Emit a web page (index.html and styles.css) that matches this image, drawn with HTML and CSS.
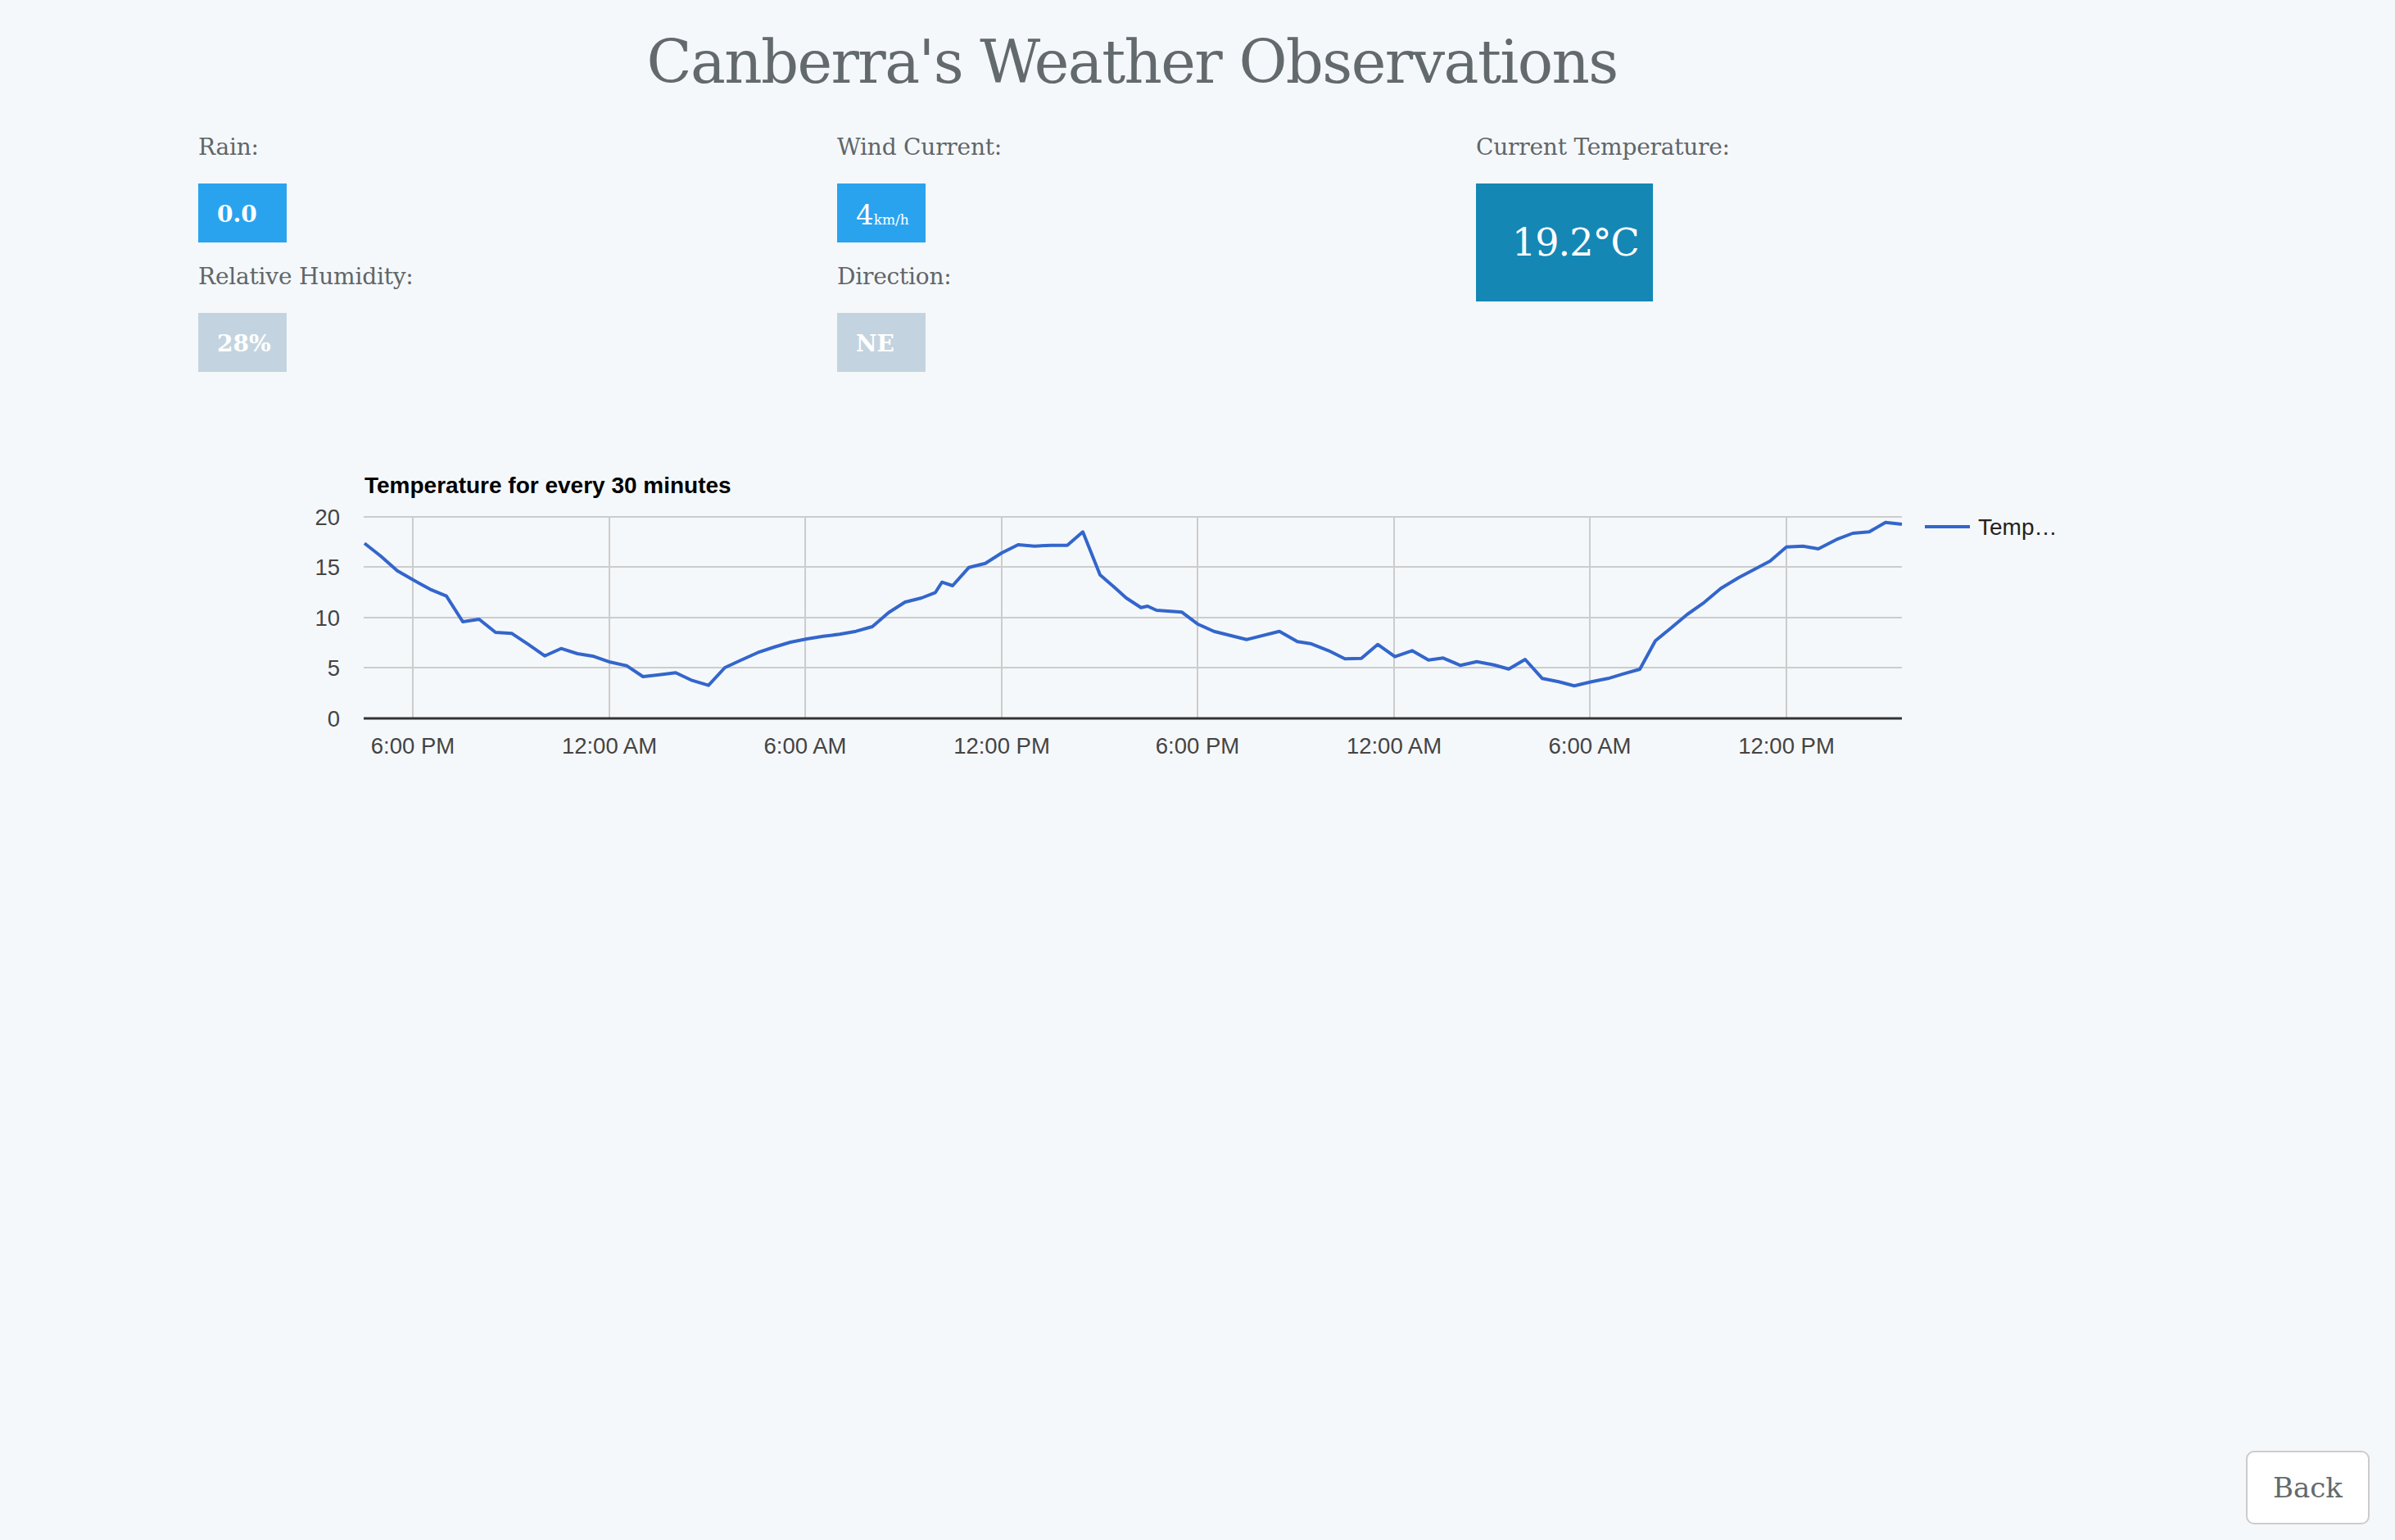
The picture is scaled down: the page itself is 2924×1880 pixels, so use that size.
FILE: index.html
```html
<!DOCTYPE html>
<html lang="en">
<head>
<meta charset="utf-8">
<title>Canberra's Weather Observations</title>
<link rel="stylesheet" href="styles.css">
</head>
<body>
<div class="page">
  <main class="container">
    <h1 class="title">Canberra's Weather Observations</h1>
    <section class="stats">
      <div class="col">
        <div class="stat">
          <div class="label">Rain:</div>
          <div class="value value-blue">0.0</div>
        </div>
        <div class="stat">
          <div class="label">Relative Humidity:</div>
          <div class="value value-grey">28%</div>
        </div>
      </div>
      <div class="col">
        <div class="stat">
          <div class="label">Wind Current:</div>
          <div class="value value-blue value-wind"><span class="num">4</span><span class="unit">km/h</span></div>
        </div>
        <div class="stat">
          <div class="label">Direction:</div>
          <div class="value value-grey">NE</div>
        </div>
      </div>
      <div class="col">
        <div class="stat">
          <div class="label">Current Temperature:</div>
          <div class="temp">19.2°C</div>
        </div>
      </div>
    </section>
    <section class="chart">
      <svg class="chart-svg" width="2200" height="380" viewBox="0 0 2200 380">
        <text class="chart-title" x="105" y="42">Temperature for every 30 minutes</text>
        <g class="grid">
          <line x1="104" x2="1982" y1="71" y2="71"/>
          <line x1="104" x2="1982" y1="132" y2="132"/>
          <line x1="104" x2="1982" y1="194" y2="194"/>
          <line x1="104" x2="1982" y1="255" y2="255"/>
          <line x1="164" x2="164" y1="71" y2="317"/>
          <line x1="404" x2="404" y1="71" y2="317"/>
          <line x1="643" x2="643" y1="71" y2="317"/>
          <line x1="883" x2="883" y1="71" y2="317"/>
          <line x1="1122" x2="1122" y1="71" y2="317"/>
          <line x1="1362" x2="1362" y1="71" y2="317"/>
          <line x1="1601" x2="1601" y1="71" y2="317"/>
          <line x1="1841" x2="1841" y1="71" y2="317"/>
        </g>
        <line class="baseline" x1="104" x2="1982" y1="317" y2="317"/>
        <g class="ylabels">
          <text x="75" y="80.5">20</text>
          <text x="75" y="141.5">15</text>
          <text x="75" y="203.5">10</text>
          <text x="75" y="264.5">5</text>
          <text x="75" y="326.5">0</text>
        </g>
        <g class="xlabels">
          <text x="164" y="360">6:00 PM</text>
          <text x="404" y="360">12:00 AM</text>
          <text x="643" y="360">6:00 AM</text>
          <text x="883" y="360">12:00 PM</text>
          <text x="1122" y="360">6:00 PM</text>
          <text x="1362" y="360">12:00 AM</text>
          <text x="1601" y="360">6:00 AM</text>
          <text x="1841" y="360">12:00 PM</text>
        </g>
        <polyline class="series" points="105,103.3 125,119 145,136.7 165,148.3 185,159.3 205,167.7 225,199 245,196 265,212 285,213.3 305,226.7 325,240.7 345,231.7 365,238 385,241.3 405,248.3 425,252.7 445,266 465,263.7 485,261.3 505,270.7 525,276.7 545,255 565,245.7 585,236.7 605,230 625,224 645,220 665,216.7 685,214.3 705,210.7 725,205 745,187.7 765,175 785,170 802,163.3 810,150.7 823,155 843,132.7 863,127.7 883,115 903,105 923,106.7 943,105.7 963,105.7 982,89.3 1003,141.7 1022,158.3 1035,170 1053,181.7 1061,180 1072,185 1103,187.3 1122,201.7 1142,210.7 1182,220.7 1222,210.7 1244,223.3 1260,225.7 1282,234.3 1302,244.3 1322,243.7 1342,226.7 1363,241.7 1384,234.3 1404,245.7 1422,243.3 1443,252.3 1463,247.7 1484,251.7 1502,256.7 1522,245 1543,268.3 1563,272.3 1582,277.3 1603,272.3 1623,268.3 1642,262.7 1662,257 1681,222.3 1700,206.7 1720,190 1739,176.7 1761,158.3 1783,145 1802,135 1821,125 1841,107.7 1861,106.7 1880,110 1902,98.7 1922,91 1942,89.3 1962,77.7 1982,80"/>
        <line class="legend-line" x1="2010" x2="2065" y1="83" y2="83"/>
        <text class="legend-text" x="2075" y="93">Temp…</text>
      </svg>
    </section>
  </main>
  <footer class="actions">
    <button class="back" type="button">Back</button>
  </footer>
</div>
</body>
</html>
```

FILE: styles.css
```css
html, body {
  margin: 0;
  padding: 0;
  background: #f5f8fa;
}

.page {
  min-height: 100vh;
  display: flex;
  flex-direction: column;
  font-family: "DejaVu Serif", "Liberation Serif", serif;
  color: #636a6d;
}

.container {
  width: 2280px;
  margin-left: 242px;
}

.title {
  margin: 31px 0 0;
  font-size: 72px;
  line-height: 90px;
  font-weight: 400;
  letter-spacing: -1.6px;
  text-align: center;
  color: #636a6d;
}

.stats {
  display: grid;
  grid-template-columns: repeat(3, 720px);
  column-gap: 60px;
  margin-top: 39px;
}

.col {
  display: flex;
  flex-direction: column;
  gap: 22px;
}

.label {
  font-size: 28px;
  line-height: 40px;
  margin-bottom: 24px;
  letter-spacing: -0.2px;
  color: #5f6669;
}

.value {
  width: 108px;
  height: 72px;
  box-sizing: border-box;
  padding-left: 23px;
  font-size: 28px;
  font-weight: 700;
  line-height: 76px;
  color: #ffffff;
  white-space: nowrap;
}

.value-blue {
  background: #2aa3ef;
}

.value-grey {
  background: #c3d4e0;
}

.value-wind {
  font-weight: 400;
}

.value-wind .num {
  font-size: 34px;
}

.value-wind .unit {
  font-size: 17px;
}

.temp {
  width: 216px;
  height: 144px;
  box-sizing: border-box;
  padding-left: 44px;
  background: #1487b5;
  color: #ffffff;
  font-size: 46px;
  letter-spacing: -1px;
  line-height: 144px;
  white-space: nowrap;
}

.chart {
  margin-top: 106px;
  margin-left: 98px;
}

.chart-svg {
  display: block;
  font-family: "Liberation Sans", Arial, sans-serif;
}

.chart-title {
  font-size: 28px;
  font-weight: 700;
  fill: #000000;
}

.grid line {
  stroke: #cccccc;
  stroke-width: 2;
}

.baseline {
  stroke: #333333;
  stroke-width: 3;
}

.ylabels text {
  font-size: 27.5px;
  fill: #444444;
  text-anchor: end;
}

.xlabels text {
  font-size: 27.5px;
  fill: #444444;
  text-anchor: middle;
}

.series {
  fill: none;
  stroke: #3366cc;
  stroke-width: 4;
  stroke-linejoin: round;
}

.legend-line {
  stroke: #3366cc;
  stroke-width: 4;
}

.legend-text {
  font-size: 28px;
  fill: #222222;
}

.actions {
  margin-top: auto;
  display: flex;
  justify-content: flex-end;
  padding: 0 31px 19px 0;
}

.back {
  width: 151px;
  height: 90px;
  box-sizing: border-box;
  border: 2px solid #cccccc;
  border-radius: 10px;
  background: #ffffff;
  font-family: "DejaVu Serif", "Liberation Serif", serif;
  font-size: 34px;
  color: #636a6d;
  padding: 0;
}
```
